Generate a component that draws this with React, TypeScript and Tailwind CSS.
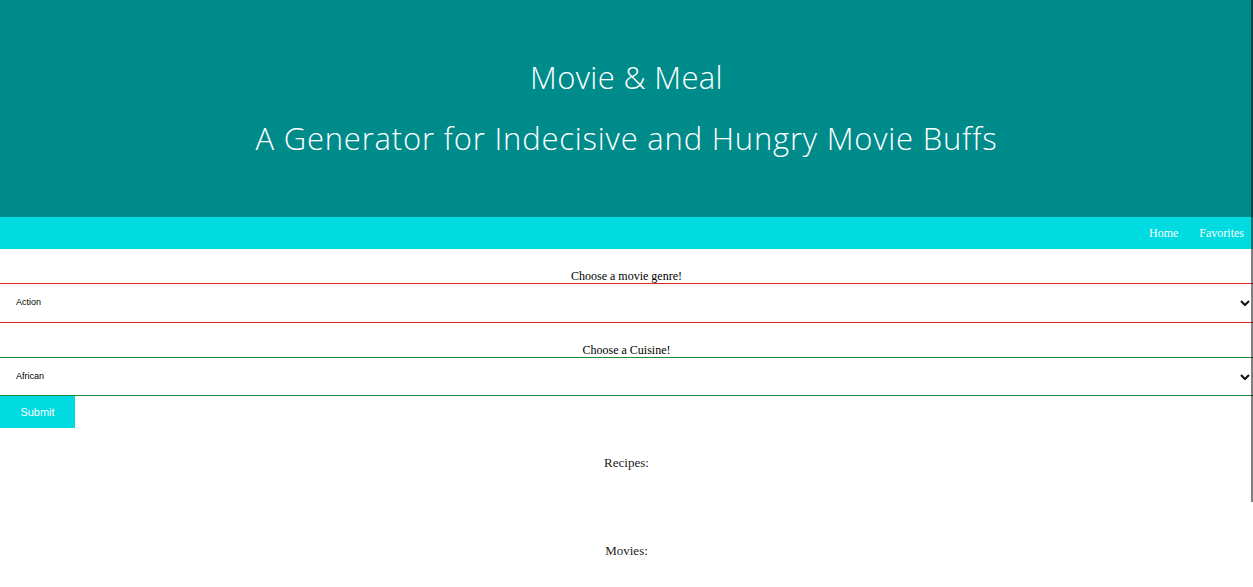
import type React from "react";

const serif = "font-['Liberation_Serif',serif]";

const Chevron: React.FC = () => (
  <svg
    className="pointer-events-none absolute right-[3px] top-1/2 -translate-y-1/2"
    width="10"
    height="7"
    viewBox="0 0 10 7"
    fill="none"
  >
    <path d="M1 1.5l4 4 4-4" stroke="#111" strokeWidth="2" />
  </svg>
);

const Picker: React.FC<{ label: string; value: string; border: string; h: string }> = ({ label, value, border, h }) => (
  <div className="flex flex-col items-center">
    <label className={`${serif} text-[12px] leading-[14px] text-black`}>{label}</label>
    <div className="relative w-full">
      <select
        defaultValue={value}
        className={`block ${h} w-full appearance-none border-y ${border} bg-white pl-[16px] font-['Liberation_Sans',Arial,sans-serif] text-[9px] text-black outline-none`}
      >
        <option>{value}</option>
      </select>
      <Chevron />
    </div>
  </div>
);

export default function App() {
  return (
    <div className="relative min-h-[587px] w-[1253px] bg-white">
      {/* Header */}
      <header className="flex h-[217px] flex-col items-center bg-[#008b8b] pt-[57px] font-['Open_Sans',sans-serif] font-light text-white">
        <h1 className="text-[31px] leading-[40px] tracking-[0.35px]">Movie &amp; Meal</h1>
        <h2 className="mt-[21px] text-[31px] leading-[40px] tracking-[0.8px]">A Generator for Indecisive and Hungry Movie Buffs</h2>
      </header>

      {/* Nav */}
      <nav className={`flex h-[32px] items-center justify-end gap-[21px] bg-[#00dbe2] pr-[9px] ${serif} text-[12px] text-white`}>
        <a href="#">Home</a>
        <a href="#">Favorites</a>
      </nav>

      {/* Form */}
      <form className="flex flex-col pt-[20px]">
        <Picker label="Choose a movie genre!" value="Action" border="border-[#e0261c]" h="h-[40px]" />
        <div className="h-[20px]" />
        <Picker label="Choose a Cuisine!" value="African" border="border-[#1f8a3a]" h="h-[39px]" />
        <button
          type="button"
          className="h-[32px] w-[75px] bg-[#00dbe2] font-['Liberation_Sans',Arial,sans-serif] text-[11px] text-white"
        >
          Submit
        </button>
      </form>

      {/* Results */}
      <section className={`flex flex-col items-center ${serif} text-[13px] text-[#222]`}>
        <h3 className="mt-[27px] leading-[16px]">Recipes:</h3>
        <div className="h-[72px]" />
        <h3 className="leading-[16px]">Movies:</h3>
      </section>

      {/* right edge line */}
      <div className="absolute right-0 top-0 h-[502px] w-[2px] bg-black/50" />
    </div>
  );
}
